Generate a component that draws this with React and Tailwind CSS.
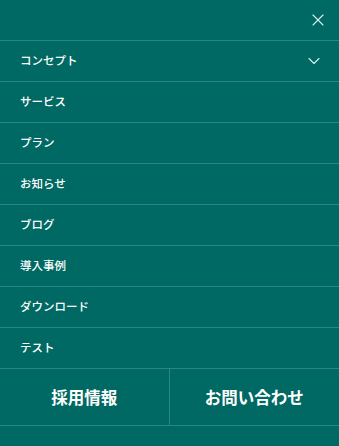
import { X, ChevronDown } from "lucide-react";

const items = ["コンセプト", "サービス", "プラン", "お知らせ", "ブログ", "導入事例", "ダウンロード", "テスト"];

export default function App() {
    return (
        <div
            className="w-[339px] h-[446px] bg-[#006963] text-white"
            style={{ fontFamily: '"Noto Sans CJK JP", "Noto Sans", sans-serif' }}
        >
            <div className="h-10 flex items-center justify-end pr-[11px]">
                <button className="text-[#d9eeec]">
                    <X size={20} strokeWidth={1.3} />
                </button>
            </div>
            <ul>
                {items.map((item, i) => (
                    <li
                        key={item}
                        className="h-[41px] border-t border-[#2b8580] flex items-center justify-between pl-5 pr-[15px]"
                    >
                        <span className="text-[11.5px] font-medium">{item}</span>
                        {i === 0 && <ChevronDown size={20} strokeWidth={1.3} className="text-[#d9eeec]" />}
                    </li>
                ))}
            </ul>
            <div className="grid grid-cols-2 border-y border-[#2b8580] h-[58px]">
                <button className="font-bold text-[16.5px] border-r border-[#2b8580]">採用情報</button>
                <button className="font-bold text-[16.5px]">お問い合わせ</button>
            </div>
        </div>
    );
}
